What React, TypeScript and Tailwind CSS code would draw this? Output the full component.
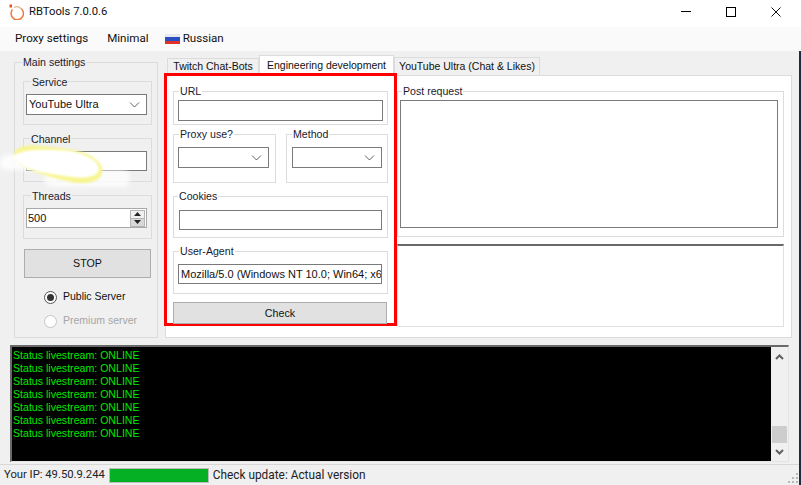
import React from "react";

const ui = "font-['Liberation_Sans',sans-serif]";
const seg = "font-['Roboto',sans-serif]";

const GroupBox = ({
  label,
  className,
  labelClass,
  children,
}: {
  label: string;
  className: string;
  labelClass?: string;
  children?: React.ReactNode;
}) => (
  <div className={`relative border border-[#dcdcdc] ${className}`}>
    <span
      className={`absolute -top-[8px] whitespace-nowrap bg-inherit px-[1px] text-[10.6px] leading-[15px] text-[#1a1a2e] ${labelClass ?? "left-[6px]"}`}
    >
      {label}
    </span>
    {children}
  </div>
);

const Field = ({ className, children }: { className: string; children?: React.ReactNode }) => (
  <div className={`flex items-center overflow-hidden whitespace-nowrap border border-[#7a7a7a] bg-white text-[11px] text-[#111] ${className}`}>
    {children}
  </div>
);

const Chevron = () => (
  <svg width="11" height="6" viewBox="0 0 11 6" className="ml-auto mr-[6px] shrink-0" fill="none" stroke="#606060">
    <path d="M1 .5 5.500 5 10 .5" />
  </svg>
);

const Combo = ({ className, text }: { className: string; text?: string }) => (
  <Field className={className}>
    {text && <span className="pl-[2px]">{text}</span>}
    <Chevron />
  </Field>
);

const WinButton = ({ className, text }: { className: string; text: string }) => (
  <button className={`block border border-[#adadad] bg-[#e1e1e1] text-[10.7px] text-[#111] ${className}`}>{text}</button>
);

const Logo = () => (
  <svg width="16" height="16" viewBox="0 0 16 16" fill="none" className="ml-[8px] shrink-0">
    <path d="M4.500 5.500A6.200 6.200 0 1 0 13 4.500" stroke="#ef7a35" strokeWidth="1.500" />
    <path d="M6 3.500A6.200 6.200 0 0 1 13 4.500" stroke="#e0b890" strokeWidth="1.200" />
    <rect x="1.500" y="0.500" width="2.500" height="3" fill="#e8541e" />
  </svg>
);

const Tabs = () => (
  <div className="flex h-[20px] items-end whitespace-nowrap pl-[2px] text-[10.5px] text-[#111]">
    <div className="flex h-[17px] w-[92px] items-center justify-center border border-b-0 border-[#dcdcdc] bg-[#f0f0f0]">Twitch Chat-Bots</div>
    <div className="flex h-[20px] w-[135px] items-center justify-center border border-b-0 border-[#dcdcdc] bg-white">Engineering development</div>
    <div className="flex h-[18px] w-[146px] items-center justify-center border border-b-0 border-[#dcdcdc] bg-[#f0f0f0]">YouTube Ultra (Chat &amp; Likes)</div>
  </div>
);

const MainSettings = () => (
  <GroupBox label="Main settings" labelClass="left-[7px]" className="h-[276px] w-[144px] bg-[#f0f0f0] pl-[8px] pt-[18px]">
    <GroupBox label="Service" labelClass="left-[7px] translate-y-[1px]" className="h-[44px] w-[129px] bg-[#f0f0f0] pl-[2px] pt-[12px]">
      <Combo className="h-[21px] w-[121px]" text="YouTube Ultra" />
    </GroupBox>
    <GroupBox label="Channel" labelClass="left-[6px] translate-y-[1px]" className="mt-[13px] h-[44px] w-[129px] bg-[#f0f0f0] pl-[2px] pt-[12px]">
      <Field className="h-[20px] w-[121px]" />
    </GroupBox>
    <GroupBox label="Threads" labelClass="left-[7px] translate-y-[1px]" className="mt-[13px] h-[44px] w-[129px] bg-[#f0f0f0] pl-[2px] pt-[12px]">
      <Field className="h-[20px] w-[121px] border-[#a9a9a9]">
        <span className="pl-[1px]">500</span>
        <div className="ml-auto mr-[1px] flex h-[17px] w-[15px] flex-col border border-[#b4b4b4]">
          <div className="flex flex-1 items-center justify-center border-b border-[#b4b4b4] bg-[#f0f0f0]">
            <svg width="7" height="4" viewBox="0 0 7 4"><path d="M3.500 0 7 4H0z" fill="#222" /></svg>
          </div>
          <div className="flex flex-1 items-center justify-center bg-[#d8d8d8]">
            <svg width="7" height="4" viewBox="0 0 7 4"><path d="M0 0h7L3.500 4z" fill="#222" /></svg>
          </div>
        </div>
      </Field>
    </GroupBox>
    <WinButton className="ml-[1px] mt-[10px] h-[29px] w-[127px]" text="STOP" />
    <div className="ml-[21px] mt-[12px] flex h-[14px] items-center gap-[6px] whitespace-nowrap text-[10.5px] text-[#111]">
      <div className="flex h-[13px] w-[13px] items-center justify-center rounded-full border border-[#555] bg-white">
        <div className="h-[7px] w-[7px] rounded-full bg-[#333]" />
      </div>
      Public Server
    </div>
    <div className="ml-[21px] mt-[10px] flex h-[14px] items-center gap-[6px] whitespace-nowrap text-[10.5px] text-[#a5a5a5]">
      <div className="h-[13px] w-[13px] rounded-full border border-[#c4c4c4] bg-white" />
      Premium server
    </div>
  </GroupBox>
);

const EngineeringForm = () => (
  <div className="relative ml-[-2px] mt-[-3px] h-[253px] w-[233px] shrink-0 border-[3px] border-[#ff0000] bg-white pl-[6px] pt-[15px]">
    <GroupBox label="URL" labelClass="left-[5px]" className="h-[34px] w-[215px] bg-white pl-[4px] pt-[8px]">
      <Field className="h-[21px] w-[205px]" />
    </GroupBox>
    <div className="mt-[9px] flex h-[49px] gap-[10px]">
      <GroupBox label="Proxy use?" labelClass="left-[5px]" className="w-[103px] bg-white pl-[4px] pt-[12px]">
        <Combo className="h-[21px] w-[91px]" />
      </GroupBox>
      <GroupBox label="Method" labelClass="left-[5px]" className="w-[102px] bg-white pl-[5px] pt-[12px]">
        <Combo className="h-[21px] w-[90px]" />
      </GroupBox>
    </div>
    <GroupBox label="Cookies" labelClass="left-[4px]" className="mt-[13px] h-[42px] w-[215px] bg-white pl-[5px] pt-[13px]">
      <Field className="h-[20px] w-[203px]" />
    </GroupBox>
    <GroupBox label="User-Agent" labelClass="left-[5px]" className="mt-[13px] h-[43px] w-[215px] bg-white pl-[4px] pt-[12px]">
      <Field className="h-[20px] w-[204px] px-[2px]">Mozilla/5.0 (Windows NT 10.0; Win64; x6</Field>
    </GroupBox>
    <WinButton className="mt-[8px] h-[22px] w-[214px]" text="Check" />
  </div>
);

const RightSide = () => (
  <div className="flex-1 pr-[7px] pt-[15px]">
    <GroupBox label="Post request" labelClass="left-[4px]" className="h-[146px] w-[387px] bg-white pl-[2px] pt-[8px]">
      <Field className="h-[128px] w-[378px]" />
    </GroupBox>
    <div className="mt-[7px] h-[83px] w-[387px] border border-t-2 border-[#e0e0e0] border-t-[#696969] bg-white" />
  </div>
);

const Scribble = () => (
  <svg width="140" height="52" viewBox="0 0 140 52" className="absolute left-0 top-[141px]">
    <defs>
      <filter id="soft" x="-20%" y="-30%" width="140%" height="160%">
        <feGaussianBlur stdDeviation="2" />
      </filter>
      <filter id="softer" x="-20%" y="-30%" width="140%" height="160%">
        <feGaussianBlur stdDeviation="1.200" />
      </filter>
    </defs>
    <rect x="0" y="14" width="44" height="15" rx="7" fill="#ffffff" opacity="0.85" filter="url(#soft)" />
    <rect x="44" y="29" width="86" height="17" rx="8" fill="#ffffff" opacity="0.75" filter="url(#soft)" />
    <path d="M14 12C18 4 30 3 50 6C75 8 95 12 102 26C104 38 95 43 75 42C50 36 25 30 14 17Z" fill="#f8f590" filter="url(#softer)" />
    <path d="M12 16C20 7 50 8 70 10C86 13 99 20 99 28C98 35 88 38 72 36C50 33 22 30 12 16Z" fill="#ffffff" filter="url(#softer)" />
  </svg>
);

const Console = () => (
  <div className="ml-[10px] mt-[7px] flex h-[117px] w-[779px] border-b border-l-2 border-r border-t-2 border-[#e4e4e4] border-l-[#696969] border-t-[#696969]">
    <div className="flex-1 bg-black pl-[1px] pt-[2px] text-[10.6px] leading-[13px] text-[#00e800]">
      {Array.from({ length: 7 }).map((_, i) => (
        <div key={i}>Status livestream: ONLINE</div>
      ))}
    </div>
    <div className="flex w-[17px] flex-col items-center bg-[#f0f0f0]">
      <svg width="9" height="6" viewBox="0 0 9 6" className="mt-[7px]" fill="none" stroke="#606060" strokeWidth="2">
        <path d="M1 5 4.500 1.500 8 5" />
      </svg>
      <div className="mt-auto h-[17px] w-[15px] bg-[#cdcdcd]" />
      <svg width="9" height="6" viewBox="0 0 9 6" className="mb-[6px] mt-[6px]" fill="none" stroke="#606060" strokeWidth="2">
        <path d="M1 1 4.500 4.500 8 1" />
      </svg>
    </div>
  </div>
);

const StatusBar = () => (
  <div className={`relative mt-[2px] flex h-[22px] items-center border-t border-[#d7d7d7] pl-[4px] text-[11.85px] text-[#222] ${seg}`}>
    <span className="text-[11.25px]">Your IP: 49.50.9.244</span>
    <div className="ml-[4px] h-[15px] w-[100px] border border-[#bcbcbc] bg-[#06b025]" />
    <span className="ml-[4px]">Check update: Actual version</span>
    <svg width="12" height="12" viewBox="0 0 12 12" className="absolute bottom-[1px] right-[2px]" fill="#b8b8b8">
      <rect x="9" y="0" width="2" height="2" />
      <rect x="5" y="4" width="2" height="2" />
      <rect x="9" y="4" width="2" height="2" />
      <rect x="1" y="8" width="2" height="2" />
      <rect x="5" y="8" width="2" height="2" />
      <rect x="9" y="8" width="2" height="2" />
    </svg>
  </div>
);

export default function App() {
  return (
    <div className={`relative h-[485px] w-[801px] overflow-hidden bg-[#f0f0f0] ${ui}`}>
      <div className={`flex h-[27px] items-center bg-white pb-[3px] ${seg}`}>
        <Logo />
        <span className="ml-[5px] text-[11.25px] text-[#111]">RBTools 7.0.0.6</span>
        <div className="ml-auto flex items-center gap-[35px] pb-[1px] pr-[20px]">
          <div className="h-[1px] w-[10px] bg-black" />
          <div className="h-[10px] w-[10px] border border-black" />
          <svg width="10" height="10" viewBox="0 0 10 10" stroke="#111">
            <path d="M.5.5l9 9M9.500.5l-9 9" />
          </svg>
        </div>
      </div>
      <div className={`flex h-[24px] items-center gap-[19px] bg-[#fafafa] pl-[15px] text-[11.6px] text-[#111] ${seg}`}>
        <span>Proxy settings</span>
        <span>Minimal</span>
        <span className="-ml-[3px] flex items-center gap-[3px]">
          <span className="flex h-[10px] w-[15px] flex-col">
            <span className="flex-1 bg-[#e8e8ee]" />
            <span className="flex-1 bg-[#2a4fc0]" />
            <span className="flex-1 bg-[#e0302a]" />
          </span>
          Russian
        </span>
      </div>
      <div className="flex pl-[14px] pt-[11px]">
        <MainSettings />
        <div className="ml-[7px] mt-[-7px] w-[627px]">
          <Tabs />
          <div className="flex h-[263px] border border-[#dcdcdc] bg-white">
            <EngineeringForm />
            <RightSide />
          </div>
        </div>
      </div>
      <Console />
      <StatusBar />
      <Scribble />
      <div className="absolute bottom-0 right-0 top-[51px] w-[2px] bg-[#1e2d3d]" />
    </div>
  );
}
